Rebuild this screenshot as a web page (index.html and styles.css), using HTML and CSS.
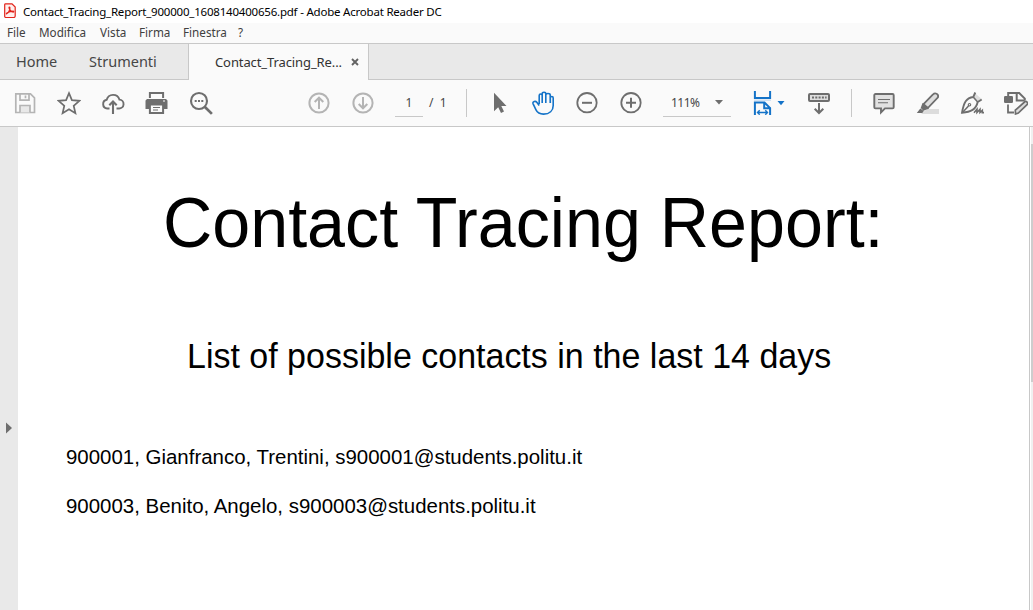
FILE: index.html
```html
<!DOCTYPE html>
<html lang="it">
<head>
<meta charset="utf-8">
<title>Contact_Tracing_Report_900000_1608140400656.pdf - Adobe Acrobat Reader DC</title>
<link rel="stylesheet" href="styles.css">
</head>
<body>
<header class="titlebar">
  <svg class="app-icon" width="12" height="15" viewBox="0 0 12 15"><path d="M1.500.8h6.500l3.200 3.200v9a1.500 1.500 0 0 1-1.500 1.500h-7.700A1.300 1.300 0 0 1 .7 13V1.500a.8.8 0 0 1 .8-.7z" fill="#fff0ee" stroke="#e2231a" stroke-width="1.200"/><path d="M2.700 10.800c1.600-.6 3.500-4 3.200-6.300-.1-.7-.9-.6-.9 0 0 2 2.500 4.500 4.300 4.600.7 0 .5-.9-.2-.9-2 0-4.700.8-6.200 1.700-.6.400-.6 1-.2.900z" fill="none" stroke="#e2231a" stroke-width="1.200"/></svg>
  <span class="title">Contact_Tracing_Report_900000_1608140400656.pdf - Adobe Acrobat Reader DC</span>
</header>
<nav class="menu"><span class="m-file">File</span><span class="m-edit">Modifica</span><span class="m-view">Vista</span><span class="m-sign">Firma</span><span class="m-window">Finestra</span><span>?</span></nav>
<div class="tabs">
  <span class="tab home">Home</span><span class="tab tools">Strumenti</span>
  <div class="tab doc"><span class="doc-name">Contact_Tracing_Re...</span><svg width="8" height="8" viewBox="0 0 8 8"><path d="M1 1l6 6M7 1L1 7" stroke="#636363" stroke-width="1.900"/></svg></div>
  <div class="tab-fill"></div>
</div>
<div class="toolbar">
  <div class="slot"><svg class="icon faded" viewBox="0 0 24 24"><path d="M2.800 2.800h14.700l4 4v14.700H2.800z"/><path d="M7 3v6.200h9V3M12.500 4.500v2.700"/><path d="M7 21.500v-7h10v7" fill="#e8e8e8"/></svg></div>
  <div class="slot"><svg class="icon" viewBox="0 0 24 24"><path d="M12 2.200l2.900 7 7.500.6-5.700 5 1.700 7.400-6.400-4-6.400 4 1.700-7.400-5.700-5 7.500-.6z" stroke-width="1.700" stroke-linejoin="miter"/></svg></div>
  <div class="slot"><svg class="icon" viewBox="0 0 24 24"><path d="M8.500 17.500H6.200a4.400 4.400 0 0 1-.5-8.700 6.600 6.600 0 0 1 12.700-.2 4.400 4.400 0 0 1-.6 8.900h-2.300" stroke-width="1.900"/><path d="M12 23V11M8.300 14.200L12 10.500l3.700 3.700" stroke-width="2.100"/></svg></div>
  <div class="slot"><svg class="icon printer" viewBox="0 0 24 24"><path d="M5.900 7V2h13.200v5" stroke-width="2"/><path class="solid" d="M3 8h19l1.500 1.500V18H20v-4H5v4H1.500V9.500z"/><path d="M5.900 13.500h13.200V22H5.900z" fill="#fafafa" stroke-width="2"/><path d="M9 16.500h7M9 19h5" stroke-width="1.100"/><path d="M19 10h2" stroke="#fff" stroke-width="1"/></svg></div>
  <div class="slot"><svg class="icon" viewBox="0 0 24 24"><circle cx="10" cy="10" r="8" stroke-width="2.100"/><path d="M15.700 15.700l7.200 7.200" stroke-width="2.700"/><path d="M5.700 10h2M9 10h2M12.300 10h2" stroke-width="1.900"/></svg></div>
  <div class="slot previous"><svg class="icon faded" viewBox="0 0 24 24"><circle cx="12" cy="12" r="9.600" stroke-width="2"/><path d="M12 18V7M7.700 11L12 6.700l4.300 4.300" stroke-width="2"/></svg></div>
  <div class="slot"><svg class="icon faded" viewBox="0 0 24 24"><circle cx="12" cy="12" r="9.600" stroke-width="2"/><path d="M12 6v11M7.700 13l4.300 4.300 4.300-4.300" stroke-width="2"/></svg></div>
  <div class="page-field">1</div><div class="page-total">/&nbsp; 1</div>
  <div class="divider first"></div>
  <div class="slot"><svg class="icon" viewBox="0 0 24 24"><path class="solid" d="M7 1.700v18.500l4.200-4 2.800 5.800 3-1.400-2.700-5.600h5.200z"/></svg></div>
  <div class="slot"><svg class="icon active" viewBox="0 0 24 24"><path d="M8.200 14.500L5.800 11.200C4.600 9.600 1.300 10.400 2 12.600L5 18.900C6.300 21.600 9 23.100 12.500 23.100c6 0 9.700-3.500 9.700-8.700V7c0-2-2.900-2-2.900 0v5M8.200 13V4.500c0-2 3-2 3 0V12M11.200 11V2.700c0-2 3.600-2 3.600 0V12M14.800 11V4c0-2 4.400-2 4.400 0v8" stroke-width="1.600"/></svg></div>
  <div class="slot"><svg class="icon" viewBox="0 0 24 24"><circle cx="12" cy="11.700" r="9.700" stroke-width="1.800"/><path d="M7 11.800h10" stroke-width="2"/></svg></div>
  <div class="slot"><svg class="icon" viewBox="0 0 24 24"><circle cx="12" cy="11.700" r="9.700" stroke-width="1.800"/><path d="M7 11.800h10M12 6.800v10" stroke-width="2"/></svg></div>
  <div class="zoom-field"><span>111%</span><svg width="8" height="5" viewBox="0 0 8 5"><path d="M0 0h8L4 4.500z" fill="#6e6e6e"/></svg></div>
  <div class="slot fit"><svg class="icon active" viewBox="0 0 24 24"><path d="M3.900 0v7.100h15.200V0" stroke-width="2"/><path d="M3 9.200h17" stroke="#cbdff3" stroke-width="1.400"/><path d="M3.900 24V11.500h9.600l5.600 5.600V24M13.200 11.500v5.800H20" stroke-width="2"/><path d="M6.500 21.500h10M8.700 19.300l-2.200 2.200 2.200 2.200M14.300 19.300l2.200 2.200-2.200 2.200" stroke-width="1.400"/></svg><svg class="fit-caret" width="8" height="5" viewBox="0 0 8 5"><path d="M.5 0h7L4 4.300z" fill="#1473c8"/></svg></div>
  <div class="slot keyboard"><svg class="icon" viewBox="0 0 24 24"><rect x="2" y="3" width="20" height="7" rx="1" fill="#dedede" stroke-width="2"/><path d="M5 6.500h2M8.300 6.500h2M11.600 6.500h2M14.900 6.500h2M18.100 6.500h1.500" stroke-width="1.800"/><path d="M12 12v10M7.700 17.700L12 22l4.300-4.300" stroke-width="2"/></svg></div>
  <div class="divider second"></div>
  <div class="slot"><svg class="icon" viewBox="0 0 24 24"><path d="M3.500 3h17a1.200 1.200 0 0 1 1.200 1.200v12a1.200 1.200 0 0 1-1.200 1.200H13l-4 4v-4H3.500a1.200 1.200 0 0 1-1.200-1.200v-12A1.200 1.200 0 0 1 3.500 3z" fill="#e1e1e1" stroke-width="1.900"/><path d="M6 8.500h12M6 11.700h10" stroke-width="1.100"/></svg></div>
  <div class="slot"><svg class="icon" viewBox="0 0 24 24"><path d="M11 18h12v5H5z" fill="#dcdcdc" stroke="none"/><path d="M7.500 13.200L17 3.500c1.800-2 6-1 5 2.800L11.800 17z" fill="#dedede" stroke-width="1.800"/><path class="solid" d="M6.500 12l6.500 5.500-5.500 2.200L4.700 17zM4.300 17.500l3.500 2.500-1.500 2H.8z"/></svg></div>
  <div class="slot"><svg class="icon" viewBox="0 0 24 24"><path d="M14.700 2l7 6-3.500 2-4.700-4.300z" fill="#dedede" stroke="none"/><path d="M15.300 1.500l-2 4.500c-7 1-9.500 5-11.300 15.800C11 21 16 18.500 17.700 11l4-2.500" stroke-width="1.900"/><path d="M13.200 6l4.500 5M2.500 21.500l6-6.500" stroke-width="1.600"/><circle cx="9.500" cy="13.700" r="1.200" stroke-width="1.200"/><path d="M14 21.700l3-3.500v3.300l3-3.300v3.300l2.300-2.200v2.300H24" stroke-width="1.600"/></svg></div>
  <div class="slot"><svg class="icon" viewBox="0 0 24 24"><path d="M4.200 5V2h11l5.600 5.600v1.900M12.700 2v7.500h8" stroke-width="2"/><rect class="solid" x="0" y="5" width="9" height="7" rx="1.300"/><path d="M4 13.500v8h6" stroke-width="1.800"/><path d="M11.500 23l-.2-3.800 9.500-8.400c1.600-1 3.600 1 2.500 2.600l-9 8.700z" fill="#dedede" stroke-width="1.700"/></svg></div>
</div>
<main class="workspace">
  <aside class="rail"><svg width="6" height="12" viewBox="0 0 6 12"><path d="M0 .5L6 6l-6 5.500z" fill="#6e6e6e"/></svg></aside>
  <article class="page"><h1><span>Contact Tracing Report:</span></h1><h2><span>List of possible contacts in the last 14 days</span></h2><p class="contact"><span>900001, Gianfranco, Trentini, s900001@students.politu.it</span></p><p class="contact"><span>900003, Benito, Angelo, s900003@students.politu.it</span></p></article>
  <div class="scrollbar"><div class="thumb"></div></div>
</main>
</body>
</html>
```
FILE: styles.css
```css
* { box-sizing: border-box; }
body { margin: 0; width: 1033px; height: 610px; overflow: hidden; display: flex; flex-direction: column; background: #fff; color: #000; font-family: "Noto Sans", "Open Sans", sans-serif; white-space: nowrap; }
.titlebar { height: 23px; display: flex; align-items: flex-start; padding: 3px 0 0 4px; font-size: 11.500px; line-height: 17px; }
.title { margin-left: 7px; letter-spacing: -.21px; }
.menu { height: 20px; background: #fafafa; display: flex; padding-left: 7px; font-size: 11.700px; line-height: 18px; color: #404040; }
.m-file { width: 32px; }
.m-edit { width: 61px; }
.m-view { width: 39px; }
.m-sign { width: 44px; }
.m-window { width: 55px; }
.tabs { height: 37px; display: flex; border-top: 1px solid #c8c8c8; font-size: 14.500px; line-height: 35px; color: #464646; }
.tab { background: #e9e9e9; border-bottom: 1px solid #c8c8c8; }
.home { width: 73px; padding-left: 16px; }
.tools { width: 115px; padding-left: 16px; }
.doc { width: 181px; display: flex; align-items: center; background: #fafafa; border-left: 1px solid #c8c8c8; border-right: 1px solid #c8c8c8; border-bottom: 0; padding-left: 26px; font-size: 13px; color: #323232; }
.doc-name { width: 136px; letter-spacing: -.1px; }
.tab-fill { flex: 1; background: #e9e9e9; border-bottom: 1px solid #c8c8c8; }
.toolbar { height: 47px; flex: none; display: flex; align-items: center; padding-left: 3px; background: #fafafa; border-bottom: 1px solid #c8c8c8; overflow: hidden; }
.toolbar > div { flex: none; }
.slot { width: 44px; height: 46px; display: flex; align-items: center; justify-content: center; }
.icon { width: 24px; height: 24px; flex: none; fill: none; stroke: #6e6e6e; stroke-width: 1.700; }
.faded { stroke: #b4b4b4; }
.active { stroke: #1473c8; }
.icon .solid { fill: #6e6e6e; stroke: none; }
.printer { margin-right: 2px; }
.previous { margin-left: 74px; }
.page-field { width: 28px; height: 28px; margin: 0 0 0 10px; border-bottom: 1px solid #c8c8c8; text-align: center; font-size: 12px; line-height: 27px; color: #464646; }
.page-total { width: 37px; padding-left: 6px; font-size: 12px; line-height: 16px; color: #464646; }
.divider { width: 1px; height: 28px; background: #c8c8c8; }
.divider.first { margin: 0 10px 0 6px; }
.divider.second { margin: 0 10px; }
.zoom-field { width: 68px; height: 28px; margin: 0 0 0 10px; border-bottom: 1px solid #c8c8c8; display: flex; align-items: center; justify-content: space-between; padding: 0 8px; font-size: 12px; color: #464646; }
.zoom-field span { letter-spacing: -.5px; }
.fit { width: 53px; margin-left: 9px; justify-content: flex-start; padding-left: 11px; }
.fit-caret { margin-left: 2px; }
.keyboard { margin-left: 4px; }
.workspace { flex: 1; display: flex; min-height: 0; }
.rail { width: 18px; background: #e9e9e9; padding: 295px 0 0 6px; line-height: 0; }
.page { width: 1011px; font-family: "Liberation Sans", Arial, sans-serif; }
h1, h2, p { margin: 0; font-weight: 400; }
h1 span, h2 span { display: inline-block; transform-origin: left center; }
h1 { padding: 56px 0 0 145px; font-size: 71px; line-height: 80px; }
h1 span { transform: scaleX(.961); }
h2 { padding: 73px 0 0 169px; font-size: 35px; line-height: 40px; }
h2 span { transform: scaleX(.971); }
.contact { padding-left: 48px; font-size: 20.460px; line-height: 24px; }
h2 + .contact { padding-top: 69px; margin-bottom: 25px; }
.scrollbar { width: 4px; background: #f0f0f0; border-left: 1px solid #c8c8c8; padding: 17px 0 0 1px; box-shadow: inset 1px 0 #fff; }
.thumb { height: 238px; background: #cdcdcd; }
```
